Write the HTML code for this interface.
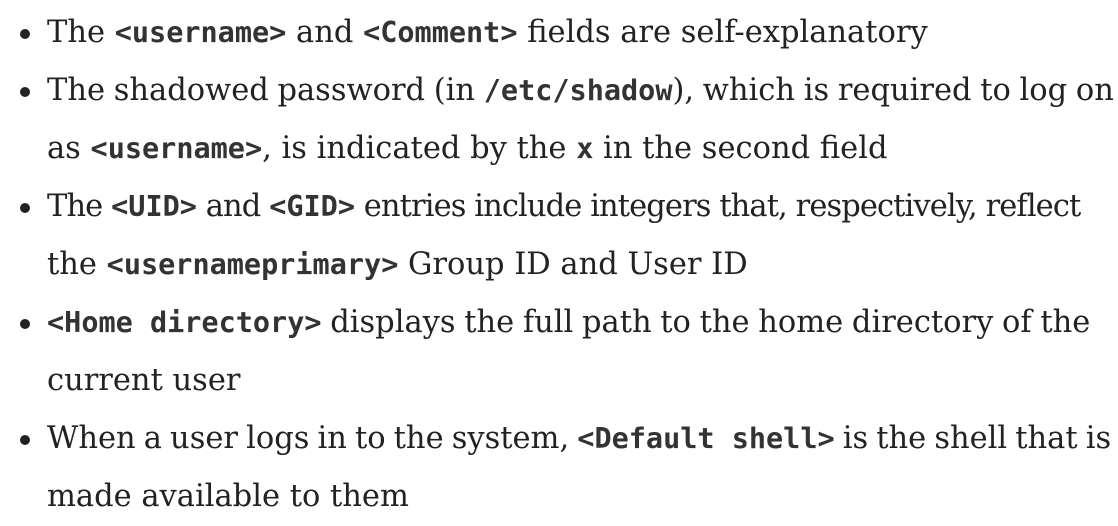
<!DOCTYPE html>
<html><head><meta charset="utf-8"><style>
html,body{margin:0;padding:0;background:#fff;width:1118px;height:518px;overflow:hidden}
body{font-family:"DejaVu Serif","Liberation Serif",serif;font-size:30.5px;color:#222}
.wrap{position:absolute;left:47px;top:4px}
.l{height:58px;line-height:58px;white-space:nowrap;position:relative}
.b::before{content:"";position:absolute;left:-27px;top:25px;width:10px;height:10px;border-radius:50%;background:#222}
code{font-family:"DejaVu Sans Mono","Liberation Mono",monospace;font-weight:bold;font-size:28.5px;color:#333;letter-spacing:0;word-spacing:0}
</style></head><body>
<div class="wrap">
<div class="l b">The <code>&lt;username&gt;</code> and <code>&lt;Comment&gt;</code> fields are self-explanatory</div>
<div class="l b" style="word-spacing:-1px">The shadowed password (in <code>/etc/shadow</code>), which is required to log on</div>
<div class="l">as <code>&lt;username&gt;</code>, is indicated by the <code>x</code> in the second field</div>
<div class="l b" style="letter-spacing:-0.9px">The <code>&lt;UID&gt;</code> and <code>&lt;GID&gt;</code> entries include integers that, respectively, reflect</div>
<div class="l">the <code>&lt;usernameprimary&gt;</code> Group ID and User ID</div>
<div class="l b" style="word-spacing:-1px"><code>&lt;Home directory&gt;</code> displays the full path to the home directory of the</div>
<div class="l">current user</div>
<div class="l b" style="word-spacing:-1.6px">When a user logs in to the system, <code>&lt;Default shell&gt;</code> is the shell that is</div>
<div class="l">made available to them</div>
</div>
</body></html>
